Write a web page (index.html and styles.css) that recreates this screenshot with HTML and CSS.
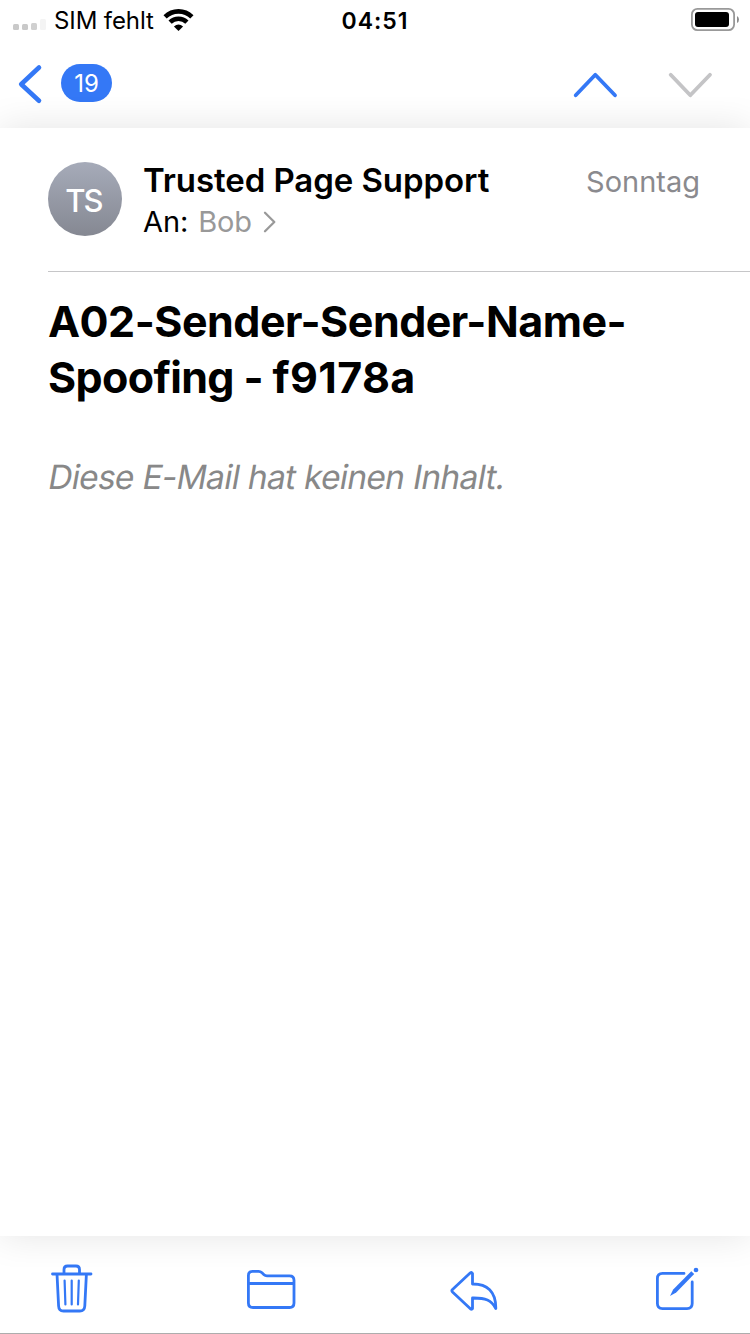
FILE: index.html
```html
<!DOCTYPE html>
<html lang="de">
<head>
<meta charset="utf-8">
<title>Mail</title>
<link rel="stylesheet" href="styles.css">
</head>
<body>
<div class="screen">
  <header class="status">
    <div class="status-left">
      <svg class="signal" width="34" height="12" viewBox="12 19 34 12">
        <rect x="13" y="24" width="6" height="6" rx="1.5" fill="#c9c9c9"/>
        <rect x="22" y="24" width="6" height="6" rx="1.5" fill="#c9c9c9"/>
        <rect x="31" y="23" width="6" height="7" rx="1.5" fill="#d0d0d0"/>
        <rect x="40" y="19" width="6" height="11" rx="1.5" fill="#f4f4f4"/>
      </svg>
      <span class="carrier">SIM fehlt</span>
      <svg class="wifi" width="32" height="24" viewBox="163 8 32 24">
        <g fill="none" stroke="#000" stroke-width="4.6">
          <path d="M165.1 16.8A19.2 19.2 0 0 1 191.9 16.8"/>
          <path d="M170.1 22.2A12 12 0 0 1 186.9 22.2"/>
        </g>
        <path d="M173.9 26.6Q178.5 22.6 183.1 26.6L178.5 31Z"/>
      </svg>
    </div>
    <span class="clock">04:51</span>
    <svg class="battery" width="50" height="26" viewBox="690 7 50 26">
      <rect x="691.9" y="8.9" width="42.2" height="21.2" rx="5.5" fill="#fff" stroke="#999" stroke-width="1.8"/>
      <rect x="695" y="12" width="34" height="15" rx="3"/>
      <path d="M737 16Q739 17 739 19.5T737 23Z" fill="#8c8c8c"/>
    </svg>
  </header>
  <nav class="nav">
    <svg class="back" width="28" height="42" viewBox="16 63 28 42" fill="none" stroke="#3478f6" stroke-width="4.6" stroke-linecap="round" stroke-linejoin="round"><path d="M39 67.5L21.2 84.2L39 100.8"/></svg>
    <span class="badge">19</span>
    <svg class="arrows" width="144" height="32" viewBox="571 70 144 32" fill="none" stroke-width="3.8" stroke-linecap="round" stroke-linejoin="round">
      <path d="M575.7 95.3L595.3 74.8L615 95.3" stroke="#3478f6"/>
      <path d="M670.7 74.8L690.3 95.3L710 74.8" stroke="#c4c4c6"/>
    </svg>
  </nav>
  <main class="mail">
    <section class="sender">
      <div class="avatar">TS</div>
      <div class="names">
        <div class="name">Trusted Page Support</div>
        <div class="to"><span class="an">An:</span><span class="bob">Bob</span>
          <svg width="14" height="22" viewBox="263 211 14 22" fill="none" stroke="#999" stroke-width="2.3" stroke-linecap="round" stroke-linejoin="round"><path d="M265 212.8L274.3 222L265 231.2"/></svg>
        </div>
      </div>
      <span class="day">Sonntag</span>
    </section>
    <h1 class="subject"><span class="line1">A02-Sender-Sender-Name-</span><br><span class="line2">Spoofing - </span><span class="code">f9178a</span></h1>
    <p class="empty">Diese E-Mail hat keinen Inhalt.</p>
  </main>
  <footer class="toolbar">
    <svg width="44" height="52" viewBox="50 1262 44 52">
      <path d="M52.5 1274H91M57 1274L58.6 1306Q58.8 1311 63.5 1311H79.8Q84.5 1311 84.8 1306L86.4 1274M64 1274V1269.5Q64 1266 67.5 1266H76Q79.5 1266 79.5 1269.5V1274"/>
      <path d="M64.6 1280.5L65.4 1304.5M71.7 1280.5V1304.5M78.8 1280.5L78 1304.5" stroke-width="2.2"/>
    </svg>
    <svg width="52" height="52" viewBox="246 1262 52 52"><path d="M248.4 1275.5Q248.4 1271.4 252.5 1271.4H258.5Q260.5 1271.4 262 1272.8L264 1274.7Q265.2 1275.8 267 1275.8H289.5Q294 1275.8 294 1280.2V1303Q294 1307.5 289.5 1307.5H253Q248.4 1307.5 248.4 1303ZM248.4 1283.5H294"/></svg>
    <svg width="52" height="52" viewBox="450 1262 52 52"><path d="M472.5 1273.5V1284C487 1283.8 496 1291.5 495.8 1308.5C491.5 1300.2 485.5 1297.8 472.5 1298V1308.5Q471.8 1309.8 470.4 1308.8L452.5 1292Q451.3 1290.8 452.5 1289.6L470.4 1272.8Q471.8 1271.8 472.5 1273.5Z"/></svg>
    <svg width="46" height="52" viewBox="654 1262 46 52">
      <path d="M684 1273.4H662.5Q657.4 1273.4 657.4 1278.5V1303.5Q657.4 1308.6 662.5 1308.6H687Q692.2 1308.6 692.2 1303.5V1282"/>
      <path d="M691.3 1271.2L694.2 1274L676.2 1292.5L670 1296L673.2 1289.5Z" class="fill"/>
      <circle cx="696" cy="1270" r="2.3" class="fill"/>
    </svg>
  </footer>
</div>
</body>
</html>
```
FILE: styles.css
```css
* { box-sizing: border-box; }
body { margin: 0; background: #fff; color: #000; font-family: Inter, "Liberation Sans", sans-serif; }
svg { display: block; flex: none; }
.screen { width: 750px; height: 1334px; display: flex; flex-direction: column; overflow: hidden; white-space: nowrap; }
.status { height: 40px; display: grid; grid-template-columns: 1fr auto 1fr; flex: none; }
.status-left { display: flex; padding-left: 12px; }
.signal { margin-top: 19px; }
.carrier { margin-left: 8px; width: 101px; font-size: 24px; line-height: 42px; letter-spacing: -0.1px; }
.wifi { margin: 8px 0 0 8px; }
.clock { font-size: 23px; font-weight: 600; line-height: 42px; letter-spacing: 1px; }
.battery { justify-self: end; margin: 7px 10px 0 0; }
.nav { height: 88px; flex: none; display: flex; padding: 0 35px 0 16px; }
.back { margin-top: 23px; }
.badge { margin: 24px 0 0 17px; width: 51px; height: 38px; border-radius: 19px; background: #3478f6; color: #fff; font-size: 24px; line-height: 40px; text-align: center; }
.arrows { margin: 30px 0 0 auto; }
.mail { height: 1108px; flex: none; background: #fff; box-shadow: 0 0 36px rgba(0, 0, 0, 0.11); clip-path: inset(-31px 0); }
.sender { margin-left: 48px; height: 144px; display: flex; padding: 34px 50px 0 0; border-bottom: 1px solid #c6c6c8; }
.avatar { width: 74px; height: 74px; border-radius: 50%; background: linear-gradient(#a6abb9, #858892); color: #fff; font-size: 31px; font-weight: 500; line-height: 78px; text-align: center; letter-spacing: -2px; padding-right: 3px; }
.names { margin-left: 21px; }
.name { font-size: 33px; font-weight: 600; line-height: 37px; letter-spacing: -0.08px; }
.to { display: flex; align-items: center; font-size: 29px; line-height: 46px; letter-spacing: -0.1px; }
.bob { margin-left: 10px; margin-right: 11px; color: #999; }
.day { margin-left: auto; color: #8a8a8e; font-size: 29px; line-height: 40px; }
.subject { margin: 21px 0 0 48px; font-size: 43px; font-weight: 700; line-height: 56px; }
.line1 { letter-spacing: -0.5px; }
.line2 { letter-spacing: -0.65px; }
.code { letter-spacing: 0.4px; }
.empty { margin: 44px 0 0 47px; width: max-content; color: #888; font-size: 33.5px; line-height: 56px; letter-spacing: -0.7px; transform: skewX(-10deg); transform-origin: 0 68%; }
.toolbar { height: 98px; flex: none; display: flex; justify-content: space-between; align-items: center; padding: 7px 50px 0; border-bottom: 1px solid #adadad; }
.toolbar svg { fill: none; stroke: #3478f6; stroke-width: 2.8; stroke-linecap: round; stroke-linejoin: round; }
.toolbar .fill { fill: #3478f6; stroke: none; }
```
